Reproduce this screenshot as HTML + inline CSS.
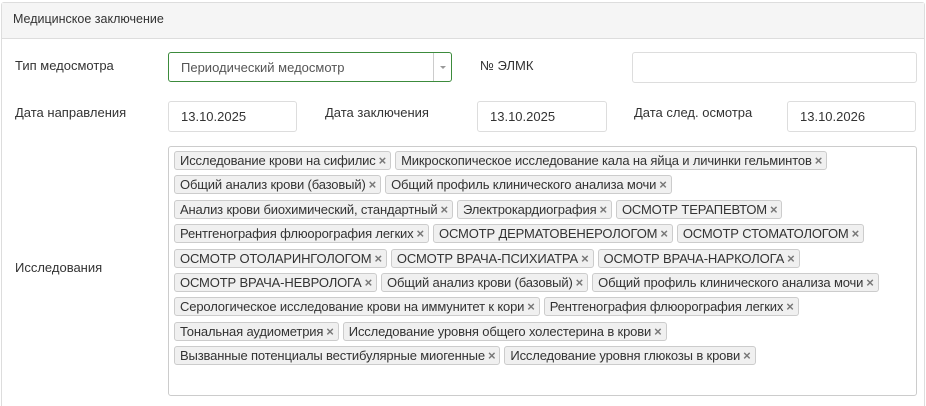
<!DOCTYPE html>
<html><head><meta charset="utf-8"><style>
*{box-sizing:border-box;margin:0;padding:0}
html,body{width:926px;height:406px;overflow:hidden}
body{background:#fff;font-family:"Liberation Sans",Arial,sans-serif;font-size:13px;color:#333;position:relative}
.panel{position:absolute;left:1px;top:2px;width:924px;height:410px;border:1px solid #ddd;border-bottom:none;border-radius:3px}
.hd{position:absolute;left:0;top:0;right:0;height:36px;background:#f5f5f5;border-bottom:1px solid #ddd;padding:9px 11px;font-size:12.5px}
.lbl{position:absolute;font-size:13px;color:#333}
.inp{position:absolute;height:31px;border:1px solid #ddd;border-radius:3px;padding:7px 12px;font-size:13px;color:#333;background:#fff}
.sel{border:1px solid #3c8b3c;color:#555}
.sel .ar{position:absolute;right:0;top:0;bottom:0;width:18px;border-left:1px solid #ccc}
.sel .ar:after{content:"";position:absolute;left:6px;top:13px;border:3px solid transparent;border-top:3px solid #999}
.ta{position:absolute;left:168px;top:146px;width:749px;height:250px;border:1px solid #ccc;border-radius:3px;padding:3px 5px}
.row{height:24.4px;white-space:nowrap}
.t{display:inline-block;margin:1px 4px 0 0;background:#f0f0f0;border:1px solid #ccc;border-radius:3px;padding:0 4px 0 5px;height:19px;line-height:17px;font-size:13px;letter-spacing:-0.15px;color:#333}
.t b{color:#777;font-size:13px;margin-left:3px;font-weight:bold}
</style></head><body>
<div class="panel"><div class="hd">Медицинское заключение</div></div>
<div class="lbl" style="left:15px;top:58px">Тип медосмотра</div>
<div class="inp sel" style="left:168px;top:52px;width:284px;height:30px">Периодический медосмотр<span class="ar"></span></div>
<div class="lbl" style="left:480px;top:58px">№ ЭЛМК</div>
<div class="inp" style="left:632px;top:52px;width:285px"></div>
<div class="lbl" style="left:15px;top:105px">Дата направления</div>
<div class="inp" style="left:168px;top:101px;width:129px">13.10.2025</div>
<div class="lbl" style="left:325px;top:105px">Дата заключения</div>
<div class="inp" style="left:477px;top:101px;width:130px">13.10.2025</div>
<div class="lbl" style="left:634px;top:105px">Дата след. осмотра</div>
<div class="inp" style="left:787px;top:101px;width:129px">13.10.2026</div>
<div class="lbl" style="left:15px;top:260px">Исследования</div>
<div class="ta">
<div class="row"><span class="t">Исследование крови на сифилис<b>×</b></span><span class="t">Микроскопическое исследование кала на яйца и личинки гельминтов<b>×</b></span></div>
<div class="row"><span class="t">Общий анализ крови (базовый)<b>×</b></span><span class="t">Общий профиль клинического анализа мочи<b>×</b></span></div>
<div class="row"><span class="t">Анализ крови биохимический, стандартный<b>×</b></span><span class="t">Электрокардиография<b>×</b></span><span class="t">ОСМОТР ТЕРАПЕВТОМ<b>×</b></span></div>
<div class="row"><span class="t">Рентгенография флюорография легких<b>×</b></span><span class="t">ОСМОТР ДЕРМАТОВЕНЕРОЛОГОМ<b>×</b></span><span class="t">ОСМОТР СТОМАТОЛОГОМ<b>×</b></span></div>
<div class="row"><span class="t">ОСМОТР ОТОЛАРИНГОЛОГОМ<b>×</b></span><span class="t">ОСМОТР ВРАЧА-ПСИХИАТРА<b>×</b></span><span class="t">ОСМОТР ВРАЧА-НАРКОЛОГА<b>×</b></span></div>
<div class="row"><span class="t">ОСМОТР ВРАЧА-НЕВРОЛОГА<b>×</b></span><span class="t">Общий анализ крови (базовый)<b>×</b></span><span class="t">Общий профиль клинического анализа мочи<b>×</b></span></div>
<div class="row"><span class="t">Серологическое исследование крови на иммунитет к кори<b>×</b></span><span class="t">Рентгенография флюорография легких<b>×</b></span></div>
<div class="row"><span class="t">Тональная аудиометрия<b>×</b></span><span class="t">Исследование уровня общего холестерина в крови<b>×</b></span></div>
<div class="row"><span class="t">Вызванные потенциалы вестибулярные миогенные<b>×</b></span><span class="t">Исследование уровня глюкозы в крови<b>×</b></span></div>
</div>
</body></html>
